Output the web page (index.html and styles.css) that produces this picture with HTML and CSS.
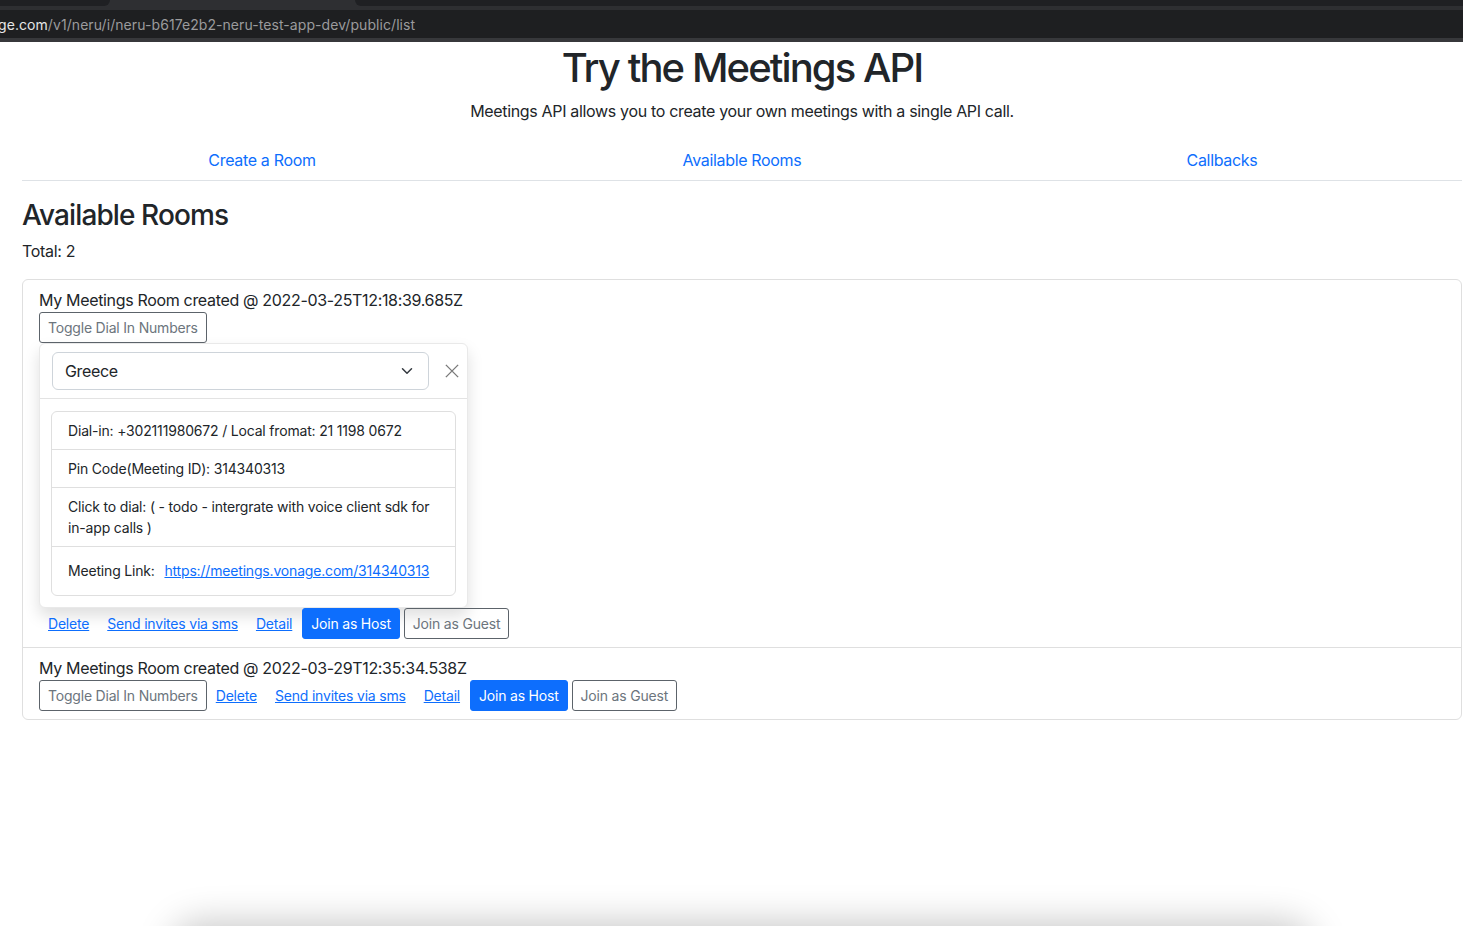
FILE: index.html
```html
<!DOCTYPE html>
<html lang="en">
<head>
<meta charset="utf-8">
<title>Try the Meetings API</title>
<link rel="stylesheet" href="styles.css">
</head>
<body>
<div class="chrome">
  <div class="tabstrip">
    <div class="tab-dark tab-left"></div>
    <div class="tab-active"></div>
    <div class="tab-dark tab-right"></div>
  </div>
  <div class="chrome-line"></div>
  <div class="urlbar"><span class="url-host">ge.com</span><span class="url-path">/v1/neru/i/neru-b617e2b2-neru-test-app-dev/public/list</span></div>
  <div class="chrome-bottom"></div>
</div>

<main class="container">
  <h1 class="title">Try the Meetings API</h1>
  <p class="lead">Meetings API allows you to create your own meetings with a single API call.</p>
  <nav class="nav">
    <a class="nav-link" href="#">Create a Room</a>
    <a class="nav-link" href="#">Available Rooms</a>
    <a class="nav-link" href="#">Callbacks</a>
  </nav>

  <h2 class="section-title">Available Rooms</h2>
  <p class="total">Total: 2</p>

  <div class="rooms">
    <div class="room">
      <div class="room-name">My Meetings Room created @ 2022-03-25T12:18:39.685Z</div>
      <div class="actions">
        <button class="btn btn-outline">Toggle Dial In Numbers</button>
      </div>
      <div class="popover">
        <div class="popover-header">
          <div class="select">
            <span>Greece</span>
            <svg class="select-arrow" viewBox="0 0 16 16" width="16" height="12"><path d="m2 5 6 6 6-6" fill="none" stroke="#343a40" stroke-width="2" stroke-linecap="round" stroke-linejoin="round"/></svg>
          </div>
          <button class="btn-close" aria-label="Close">
            <svg viewBox="0 0 16 16" width="16" height="16"><path d="M1 1 15 15M15 1 1 15" stroke="#7a7a7a" stroke-width="1.6" fill="none"/></svg>
          </button>
        </div>
        <div class="popover-body">
          <ul class="list-group">
            <li class="list-item">Dial-in: +302111980672 / Local fromat: 21 1198 0672</li>
            <li class="list-item">Pin Code(Meeting ID): 314340313</li>
            <li class="list-item">Click to dial: ( - todo - intergrate with voice client sdk for in-app calls )</li>
            <li class="list-item list-item-link">Meeting Link: <a class="inline-link" href="#">https://meetings.vonage.com/314340313</a></li>
          </ul>
        </div>
      </div>
      <div class="actions">
        <a class="btn btn-link" href="#">Delete</a>
        <a class="btn btn-link" href="#">Send invites via sms</a>
        <a class="btn btn-link" href="#">Detail</a>
        <button class="btn btn-primary">Join as Host</button>
        <button class="btn btn-outline">Join as Guest</button>
      </div>
    </div>
    <div class="room">
      <div class="room-name">My Meetings Room created @ 2022-03-29T12:35:34.538Z</div>
      <div class="actions">
        <button class="btn btn-outline">Toggle Dial In Numbers</button>
        <a class="btn btn-link" href="#">Delete</a>
        <a class="btn btn-link" href="#">Send invites via sms</a>
        <a class="btn btn-link" href="#">Detail</a>
        <button class="btn btn-primary">Join as Host</button>
        <button class="btn btn-outline">Join as Guest</button>
      </div>
    </div>
  </div>
</main>

<div class="dock-shadow"></div>
</body>
</html>
```

FILE: styles.css
```css
* { box-sizing: border-box; }

html, body {
  margin: 0;
  padding: 0;
  background: #fff;
  overflow: hidden;
}

body {
  font-family: Inter, "Liberation Sans", sans-serif;
  font-size: 16px;
  line-height: 1.5;
  letter-spacing: -0.33px;
  color: #212529;
  width: 1463px;
  height: 926px;
}

/* browser chrome */
.chrome {
  height: 42px;
  background: #1f2023;
  display: flex;
  flex-direction: column;
}
.tabstrip {
  height: 6px;
  display: flex;
  background: #2e2f32;
}
.tab-dark {
  background: #1f2023;
  height: 6px;
}
.tab-left { width: 110px; border-bottom-right-radius: 6px; }
.tab-active { width: 245px; }
.tab-right { flex: 1; border-bottom-left-radius: 6px; }
.chrome-line {
  height: 4px;
  background: #2e2f32;
}
.urlbar {
  height: 28px;
  background: #1e1f21;
  font-size: 14px;
  line-height: 29px;
  margin-left: -2px;
  white-space: nowrap;
  letter-spacing: 0.07px;
}
.url-host { color: #e6e6e6; }
.url-path { color: #9b9b9d; }
.chrome-bottom {
  height: 4px;
  background: #37383b;
}

/* page */
.container {
  width: 1440px;
  margin-left: 22px;
}

.title {
  margin: 2px 0 8px;
  font-size: 40px;
  font-weight: 500;
  line-height: 48px;
  text-align: center;
  letter-spacing: -1.9px;
}

.lead {
  margin: 0 0 16px;
  text-align: center;
  line-height: 22px;
  padding-top: 0;
  padding-bottom: 2px;
}

.nav {
  display: grid;
  grid-template-columns: repeat(3, 1fr);
  border-bottom: 1px solid #dee2e6;
  height: 41px;
}
.nav-link {
  text-align: center;
  color: #0d6efd;
  text-decoration: none;
  padding: 8px 16px;
  line-height: 24px;
}

.section-title {
  margin: 17px 0 8px;
  font-size: 28px;
  font-weight: 500;
  line-height: 34px;
  letter-spacing: -0.9px;
}

.total {
  margin: -1px 0 16px;
}

.rooms {
  border: 1px solid #dfdfdf;
  border-radius: 6px;
  width: 1440px;
}
.room {
  padding: 8px 16px;
}
.room + .room {
  border-top: 1px solid #dfdfdf;
}
.room-name {
  line-height: 24px;
}

.actions {
  display: flex;
  align-items: center;
  gap: 0;
}

.btn {
  font-family: inherit;
  display: inline-block;
  font-size: 14px;
  letter-spacing: -0.2px;
  line-height: 21px;
  padding: 4px 8px;
  border: 1px solid transparent;
  border-radius: 3px;
  background: transparent;
  cursor: pointer;
  white-space: nowrap;
}
.btn-outline {
  color: #6c757d;
  border-color: #5c636a;
}
.btn-link {
  color: #0d6efd;
  text-decoration: underline;
}
.btn-primary {
  color: #fff;
  background: #0d6efd;
  border-color: #0d6efd;
  margin-left: 1px;
}
.btn-primary + .btn-outline {
  margin-left: 4px;
}

/* popover */
.popover {
  width: 429px;
  background: #fff;
  border: 1px solid #e9e9e9;
  border-radius: 6px;
  box-shadow: 0 8px 16px rgba(0, 0, 0, 0.13);
}
.popover-header {
  display: flex;
  align-items: center;
  padding: 8px 3px 8px 12px;
  border-bottom: 1px solid #e3e3e3;
}
.select {
  width: 378px;
  height: 38px;
  border: 1px solid #ced4da;
  border-radius: 6px;
  display: flex;
  align-items: center;
  justify-content: space-between;
  padding: 0 13px 0 12px;
  font-size: 16px;
}
.btn-close {
  width: 24px;
  height: 24px;
  margin-left: 11px;
  padding: 4px;
  border: 0;
  background: transparent;
  display: flex;
  align-items: center;
  justify-content: center;
}
.btn-close svg { width: 14px; height: 14px; }

.popover-body {
  padding: 12px 11px 11px 11px;
}
.list-group {
  list-style: none;
  margin: 0;
  padding: 0;
  border: 1px solid #dfdfdf;
  border-radius: 6px;
  font-size: 14px;
  letter-spacing: -0.18px;
  line-height: 21px;
}
.list-item {
  padding: 8px 16px;
}
.list-item + .list-item {
  border-top: 1px solid #dfdfdf;
}
.list-item-link {
  padding-top: 8px;
  padding-bottom: 9px;
  line-height: 31px;
}
.inline-link {
  color: #0d6efd;
  text-decoration: underline;
  margin-left: 6px;
}

/* shadow of an element just below the viewport */
.dock-shadow {
  position: fixed;
  left: 180px;
  width: 1125px;
  top: 930px;
  height: 60px;
  border-radius: 20px;
  background: #ddd;
  box-shadow: 0 0 36px 8px rgba(0, 0, 0, 0.22);
}
```
